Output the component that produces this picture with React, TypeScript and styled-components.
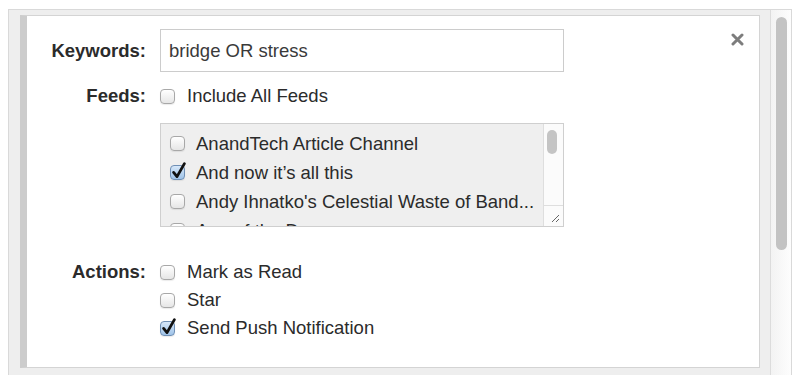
import styled, { createGlobalStyle } from 'styled-components';

const GlobalStyle = createGlobalStyle`
  html, body {
    margin: 0;
    padding: 0;
    background: #fff;
    overflow: hidden;
  }
  body {
    font-family: "Liberation Sans", Arial, sans-serif;
    color: #2b2b2b;
  }
`;

const Frame = styled.div`
  margin: 9px 0 0 8px;
  width: 784px;
  height: 380px;
  box-sizing: border-box;
  border: 1px solid #d9d9d9;
  background: #eeeeee;
  display: flex;
`;

const Content = styled.div`
  flex: 1;
  padding: 5px 10px 0 11px;
`;

const Panel = styled.section`
  position: relative;
  box-sizing: border-box;
  height: 353px;
  background: #fff;
  border: 1px solid #d4d4d4;
  border-left: 7px solid #cccccc;
  padding-top: 13px;
`;

const CloseButton = styled.button`
  position: absolute;
  top: 17px;
  right: 15px;
  width: 13px;
  height: 13px;
  padding: 0;
  border: 0;
  background: none;
  cursor: pointer;
  display: flex;
`;

const Track = styled.div`
  width: 21px;
  box-sizing: border-box;
  border-left: 1px solid #dcdcdc;
  background: linear-gradient(to right, #f3f3f3, #fdfdfd);
  padding: 7px 0 0 5px;
`;

const Thumb = styled.div`
  width: 11px;
  height: 233px;
  border-radius: 6px;
  background: #c3c3c3;
`;

const Field = styled.div<{ $gap?: number }>`
  display: grid;
  grid-template-columns: 119px 1fr;
  column-gap: 14px;
  margin-top: ${(p) => p.$gap ?? 0}px;
`;

const Label = styled.label<{ $lh: number }>`
  text-align: right;
  font-weight: bold;
  font-size: 18.5px;
  line-height: ${(p) => p.$lh}px;
  color: #2b2b2b;
`;

const Control = styled.div`
  display: flex;
  flex-direction: column;
  align-items: flex-start;
`;

const TextInput = styled.input`
  width: 404px;
  height: 43px;
  box-sizing: border-box;
  border: 1px solid #cccccc;
  border-radius: 0;
  padding: 0 8px;
  font-family: "Liberation Sans", Arial, sans-serif;
  font-size: 18.5px;
  color: #3a3a3a;
  outline: none;
`;

const CheckRow = styled.label<{ $h: number; $gap: number }>`
  display: flex;
  align-items: center;
  gap: ${(p) => p.$gap}px;
  height: ${(p) => p.$h}px;
  font-size: 18.5px;
  color: #2b2b2b;
  white-space: nowrap;
`;

const Box = styled.span<{ $checked?: boolean }>`
  position: relative;
  flex: none;
  width: 15px;
  height: 15px;
  box-sizing: border-box;
  border-radius: 4px;
  border: 1px solid ${(p) => (p.$checked ? '#6f8fb5' : '#a8a8a8')};
  background: ${(p) =>
    p.$checked
      ? 'linear-gradient(#d6e7f9, #9fc3e8)'
      : 'linear-gradient(#ffffff, #e6e6e6)'};
  box-shadow: 0 1px 1px rgba(0, 0, 0, 0.08);
`;

const Tick = styled.svg`
  position: absolute;
  left: 0;
  top: -4px;
  width: 15px;
  height: 17px;
  overflow: visible;
`;

const FeedList = styled.div`
  margin-top: 13px;
  width: 404px;
  height: 104px;
  box-sizing: border-box;
  border: 1px solid #cfcfcf;
  background: #efefef;
  display: flex;
  overflow: hidden;
`;

const FeedItems = styled.div`
  flex: 1;
  padding: 5px 0 0 9px;
  overflow: hidden;
`;

const ListScroll = styled.div`
  width: 20px;
  box-sizing: border-box;
  border-left: 1px solid #dedede;
  background: #fbfbfb;
  display: flex;
  flex-direction: column;
  justify-content: space-between;
`;

const ListThumb = styled.div`
  margin: 6px 0 0 3px;
  width: 10px;
  height: 24px;
  border-radius: 5px;
  background: #c4c4c4;
`;

const Grip = styled.div`
  height: 21px;
  box-sizing: border-box;
  border-top: 1px solid #dedede;
  display: flex;
  align-items: flex-end;
  justify-content: flex-end;
  padding: 0 3px 3px 0;
`;

const Check = ({ checked }: { checked?: boolean }) => (
  <Box $checked={checked}>
    {checked && (
      <Tick viewBox="0 0 15 17">
        <path d="M2.6 10.4 L6 14.6 L13.4 1.6" fill="none" stroke="#111" strokeWidth="2.8" strokeLinecap="round" strokeLinejoin="round" />
      </Tick>
    )}
  </Box>
);

const feeds = [
  { name: 'AnandTech Article Channel', checked: false },
  { name: 'And now it’s all this', checked: true },
  { name: "Andy Ihnatko's Celestial Waste of Band...", checked: false },
  { name: 'App of the Day', checked: false },
];

const actions = [
  { name: 'Mark as Read', checked: false },
  { name: 'Star', checked: false },
  { name: 'Send Push Notification', checked: true },
];

export default function App() {
  return (
    <>
      <GlobalStyle />
      <Frame>
        <Content>
          <Panel>
            <CloseButton aria-label="Close">
              <svg width="13" height="13" viewBox="0 0 13 13">
                <path d="M2 2 L11 11 M11 2 L2 11" stroke="#7d7d7d" strokeWidth="3" strokeLinecap="round" />
              </svg>
            </CloseButton>

            <Field>
              <Label $lh={43}>Keywords:</Label>
              <Control>
                <TextInput defaultValue="bridge OR stress" />
              </Control>
            </Field>

            <Field $gap={10}>
              <Label $lh={28}>Feeds:</Label>
              <Control>
                <CheckRow $h={28} $gap={12}>
                  <Check />
                  Include All Feeds
                </CheckRow>
                <FeedList>
                  <FeedItems>
                    {feeds.map((f) => (
                      <CheckRow key={f.name} $h={29} $gap={11}>
                        <Check checked={f.checked} />
                        {f.name}
                      </CheckRow>
                    ))}
                  </FeedItems>
                  <ListScroll>
                    <ListThumb />
                    <Grip>
                      <svg width="11" height="11" viewBox="0 0 11 11">
                        <path d="M10 3 L3 10 M10 7 L7 10" stroke="#666" strokeWidth="1" />
                      </svg>
                    </Grip>
                  </ListScroll>
                </FeedList>
              </Control>
            </Field>

            <Field $gap={31}>
              <Label $lh={28}>Actions:</Label>
              <Control>
                {actions.map((a) => (
                  <CheckRow key={a.name} $h={28} $gap={12}>
                    <Check checked={a.checked} />
                    {a.name}
                  </CheckRow>
                ))}
              </Control>
            </Field>
          </Panel>
        </Content>
        <Track>
          <Thumb />
        </Track>
      </Frame>
    </>
  );
}
